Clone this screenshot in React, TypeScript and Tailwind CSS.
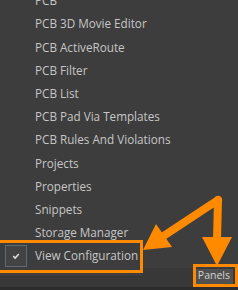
import React from 'react';

const items = [
  'PCB',
  'PCB 3D Movie Editor',
  'PCB ActiveRoute',
  'PCB Filter',
  'PCB List',
  'PCB Pad Via Templates',
  'PCB Rules And Violations',
  'Projects',
  'Properties',
  'Snippets',
  'Storage Manager',
];

export default function App() {
  return (
    <div
      className="relative w-[238px] h-[290px] overflow-hidden bg-[#3d3d3d] flex flex-col"
      style={{ fontFamily: '"Open Sans", "Noto Sans", sans-serif' }}
    >
      {/* Menu */}
      <div className="-mt-[10.6px] flex flex-col">
        {items.map((label) => (
          <div key={label} className="h-[23.2px] flex items-center pl-[35px] text-[11.7px] text-[#c6c6c6] whitespace-nowrap">
            {label}
          </div>
        ))}
        <div className="h-[23.2px] flex items-center text-[11.7px] text-[#c6c6c6] whitespace-nowrap">
          <div className="ml-[5px] w-[22px] h-[22px] border border-[#5c6a78] bg-[#434343] flex items-center justify-center">
            <svg width="10" height="10" viewBox="0 0 10 10">
              <polyline points="2.2,5.2 4.2,7 7.8,3" fill="none" stroke="#dcdcdc" strokeWidth="1.6" />
            </svg>
          </div>
          <span className="ml-[8px]">View Configuration</span>
        </div>
      </div>

      {/* Status bar */}
      <div className="flex-1 flex items-start bg-[#383838] border-b-[3px] border-[#2c2c2c]">
        <div className="w-[143px] h-[9px] bg-[#3d3d3d] border-b border-[#333]" />
        <div className="ml-auto mr-[5px] mt-[1px] h-[15px] px-[3px] flex items-center bg-[#505050] text-[10.5px] text-[#d2d2d2]">
          Panels
        </div>
      </div>

      {/* Annotation: highlight boxes */}
      <div className="absolute left-[-3px] top-[240px] w-[146px] h-[33px] border-[3px] border-[#ff8a00]" />
      <div className="absolute left-[193px] top-[264px] w-[45px] h-[23px] border-[3px] border-[#ff8a00]" />

      {/* Annotation: arrows */}
      <svg className="absolute left-0 top-0 pointer-events-none" width="238" height="290" viewBox="0 0 238 290">
        <g stroke="#ff8a00" strokeWidth="8" strokeLinecap="round" strokeLinejoin="round" fill="none">
          <line x1="218" y1="200" x2="165" y2="235" />
          <line x1="218" y1="200" x2="217" y2="240" />
        </g>
        <polygon points="143,250 156,224 172,247" fill="#ff8a00" />
        <polygon points="202,237 232,237 217,266" fill="#ff8a00" />
      </svg>
    </div>
  );
}
